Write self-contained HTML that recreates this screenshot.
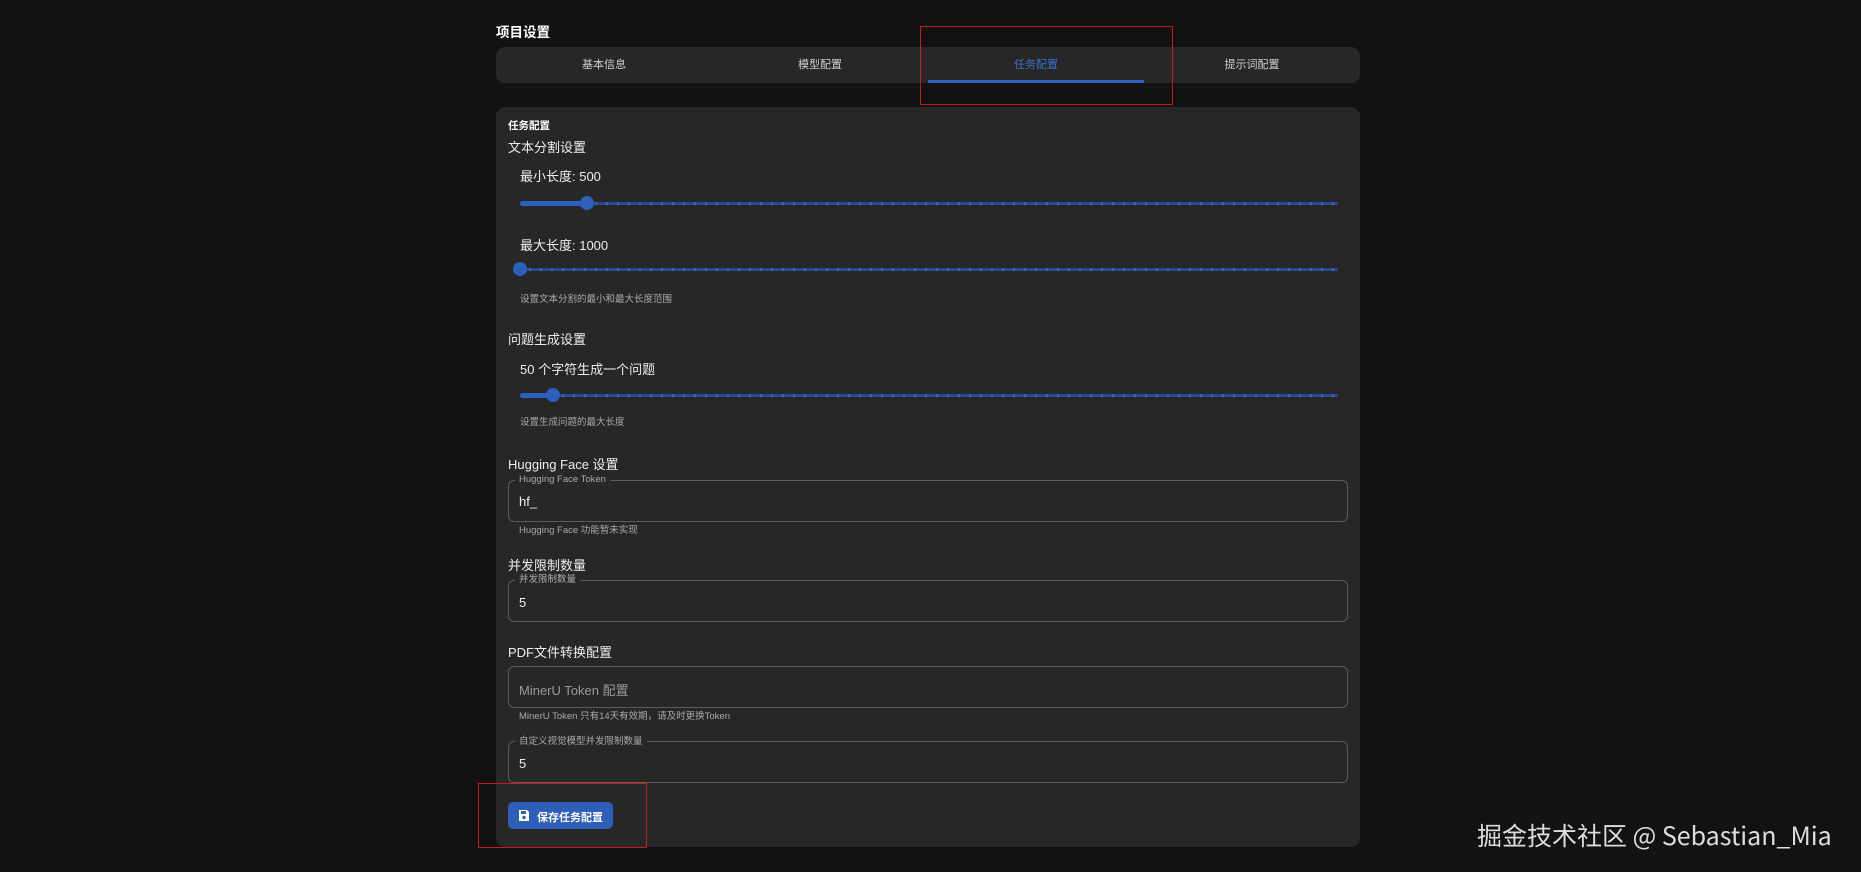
<!DOCTYPE html>
<html><head><meta charset="utf-8"><style>
*{margin:0;padding:0;box-sizing:border-box}
body{width:1861px;height:872px;background:#121212;position:relative;overflow:hidden;font-family:"Liberation Sans","Noto Sans CJK SC",sans-serif;color:#fff}
.a{position:absolute;white-space:nowrap}
.tabs{left:496px;top:47px;width:864px;height:36px;background:#272727;border-radius:9px}
.tab{position:absolute;top:1px;height:35px;line-height:34px;width:216px;text-align:center;font-size:11px;color:#cfcfcf}
.card{left:496px;top:107px;width:864px;height:740px;background:#272727;border-radius:9px}
.h{font-size:13px;font-weight:bold;line-height:16px}
.l{font-size:13px;line-height:16px;color:#eee}
.help{font-size:9.5px;color:#aaa;line-height:12px}
.track{height:3px;background:#244a8f;border-radius:2px;background-image:repeating-linear-gradient(90deg,#244a8f 0 9px,#3a64ad 9px 11px)}
.act{height:5px;background:#2d5fbd;border-radius:3px}
.th{width:14px;height:14px;border-radius:50%;background:#2d5fbd}
.inp{left:508px;width:840px;border:1px solid #5c5c5c;border-radius:6px}
.lab{font-size:9.5px;color:#aaa;background:#272727;padding:0 4px;line-height:12px}
.val{font-size:13px;color:#eee}
.red{border:1px solid #c41d1d}
</style></head><body>
<div class="a" style="left:496px;top:21px;font-size:13.5px;font-weight:bold">项目设置</div>
<div class="a tabs">
<div class="tab" style="left:0">基本信息</div>
<div class="tab" style="left:216px">模型配置</div>
<div class="tab" style="left:432px;color:#3d6fd0">任务配置</div>
<div class="tab" style="left:648px">提示词配置</div>
<div class="a" style="left:432px;top:33px;width:216px;height:3px;background:#2f62c0"></div>
</div>
<div class="a red" style="left:920px;top:26px;width:253px;height:79px"></div>
<div class="a card"></div>
<div class="a h" style="left:508px;top:118px;font-size:10.5px">任务配置</div>
<div class="a l" style="left:508px;top:140px">文本分割设置</div>
<div class="a l" style="left:520px;top:169px">最小长度: 500</div>
<div class="a track" style="left:520px;top:202px;width:818px"></div>
<div class="a act" style="left:520px;top:201px;width:67px"></div>
<div class="a th" style="left:580px;top:196px"></div>
<div class="a l" style="left:520px;top:238px">最大长度: 1000</div>
<div class="a track" style="left:520px;top:268px;width:818px"></div>
<div class="a th" style="left:513px;top:262px"></div>
<div class="a help" style="left:520px;top:294px">设置文本分割的最小和最大长度范围</div>
<div class="a l" style="left:508px;top:332px">问题生成设置</div>
<div class="a l" style="left:520px;top:362px">50 个字符生成一个问题</div>
<div class="a track" style="left:520px;top:394px;width:818px"></div>
<div class="a act" style="left:520px;top:393px;width:33px"></div>
<div class="a th" style="left:546px;top:388px"></div>
<div class="a help" style="left:520px;top:417px">设置生成问题的最大长度</div>
<div class="a l" style="left:508px;top:457px">Hugging Face 设置</div>
<div class="a inp" style="top:480px;height:42px"></div>
<div class="a lab" style="left:515px;top:474px">Hugging Face Token</div>
<div class="a val" style="left:519px;top:494px">hf_</div>
<div class="a help" style="left:519px;top:525px">Hugging Face 功能暂未实现</div>
<div class="a l" style="left:508px;top:558px">并发限制数量</div>
<div class="a inp" style="top:580px;height:42px"></div>
<div class="a lab" style="left:515px;top:574px">并发限制数量</div>
<div class="a val" style="left:519px;top:595px">5</div>
<div class="a l" style="left:508px;top:645px">PDF文件转换配置</div>
<div class="a inp" style="top:666px;height:42px"></div>
<div class="a" style="left:519px;top:680px;font-size:13px;color:#999">MinerU Token 配置</div>
<div class="a help" style="left:519px;top:711px">MinerU Token 只有14天有效期，请及时更换Token</div>
<div class="a inp" style="top:741px;height:42px"></div>
<div class="a lab" style="left:515px;top:736px">自定义视觉模型并发限制数量</div>
<div class="a val" style="left:519px;top:756px">5</div>
<div class="a" style="left:508px;top:802px;width:105px;height:27px;background:#2d5fb8;border-radius:5px"></div>
<svg class="a" style="left:518px;top:809px" width="12" height="13" viewBox="0 0 12 13"><path d="M1 1h8l2 2v9H1z" fill="#fff"/><rect x="3" y="2" width="5" height="3" fill="#2d5fb8"/><circle cx="6" cy="8.5" r="1.7" fill="#2d5fb8"/></svg>
<div class="a" style="left:537px;top:809px;font-size:11px;font-weight:bold;color:#fff">保存任务配置</div>
<div class="a red" style="left:478px;top:783px;width:169px;height:65px"></div>
<div class="a" style="left:1477px;top:818px;font-size:25px;color:#ddd;font-family:'Noto Sans CJK SC','Liberation Sans',sans-serif;line-height:34px">掘金技术社区 @ Sebastian_Mia</div>
</body></html>
